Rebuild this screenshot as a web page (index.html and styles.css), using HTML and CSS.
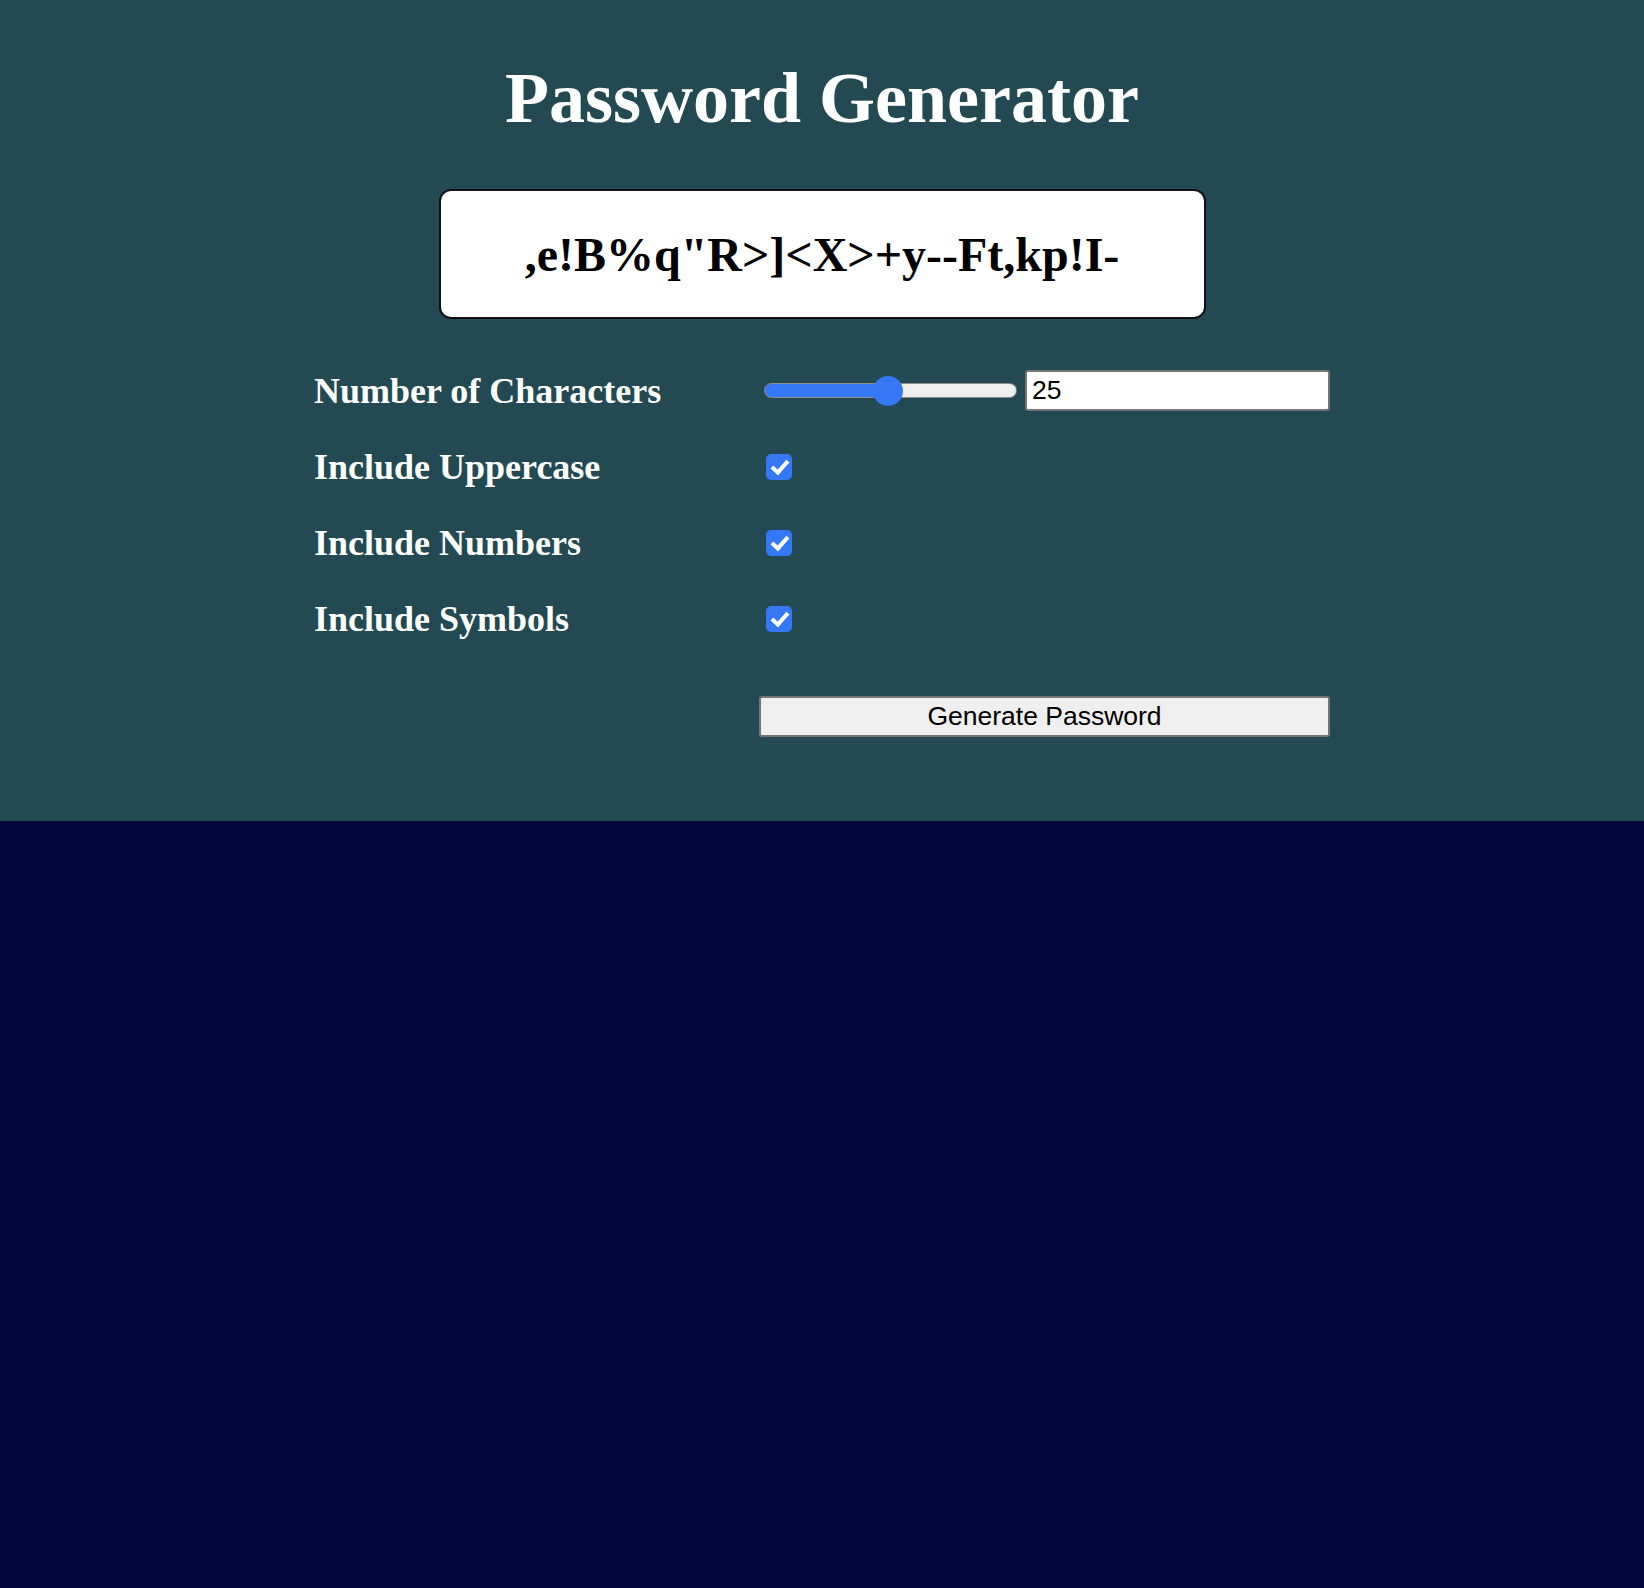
FILE: index.html
```html
<!DOCTYPE html>
<html lang="en">
<head>
<meta charset="utf-8">
<title>Password Generator</title>
<link rel="stylesheet" href="styles.css">
</head>
<body>
<main class="app">
  <h1 class="title">Password Generator</h1>
  <div class="output">,e!B%q"R&gt;]&lt;X&gt;+y--Ft,kp!I-</div>
  <form class="options">
    <label class="label" for="len">Number of Characters</label>
    <div class="control length">
      <input class="range" type="range" id="len" min="1" max="50" value="25" style="--fill: 49%">
      <input class="number" type="number" min="1" max="50" value="25">
    </div>

    <label class="label" for="upper">Include Uppercase</label>
    <div class="control"><input class="check" type="checkbox" id="upper" checked></div>

    <label class="label" for="nums">Include Numbers</label>
    <div class="control"><input class="check" type="checkbox" id="nums" checked></div>

    <label class="label" for="syms">Include Symbols</label>
    <div class="control"><input class="check" type="checkbox" id="syms" checked></div>

    <div class="spacer"></div>
    <div class="control action"><button type="button" class="generate">Generate Password</button></div>
  </form>
</main>
</body>
</html>
```

FILE: styles.css
```css
html, body {
  margin: 0;
  padding: 0;
}

body {
  background: #02063d;
  font-family: "Liberation Serif", "Times New Roman", serif;
  min-height: 1588px;
}

.app {
  background: #234a52;
  padding: 58px 0 84px;
  display: flex;
  flex-direction: column;
  align-items: center;
}

.title {
  margin: 0;
  font-size: 72px;
  line-height: 80px;
  font-weight: bold;
  color: #ffffff;
}

.output {
  box-sizing: border-box;
  margin-top: 51px;
  width: 767px;
  height: 130px;
  background: #ffffff;
  border: 2px solid #111111;
  border-radius: 12px;
  display: flex;
  align-items: center;
  justify-content: center;
  font-size: 48px;
  font-weight: bold;
  color: #000000;
}

.options {
  margin-top: 51px;
  width: 1016px;
  display: grid;
  grid-template-columns: 445px 1fr;
  grid-template-rows: 41px 40px 40px 40px 62px;
  row-gap: 36px;
  align-items: center;
}

.label {
  color: #ffffff;
  font-weight: bold;
  font-size: 36px;
  white-space: nowrap;
}

.control {
  display: flex;
  align-items: center;
  height: 41px;
}

.action {
  align-self: end;
}

.range {
  -webkit-appearance: none;
  appearance: none;
  margin: 0 0 0 5px;
  width: 253px;
  height: 30px;
  background: transparent;
  padding: 0;
}

.range::-webkit-slider-runnable-track {
  box-sizing: border-box;
  height: 15px;
  border: 1px solid #8c8c8c;
  border-radius: 8px;
  background: linear-gradient(to right, #3478f6 0, #3478f6 var(--fill), #efefef var(--fill), #efefef 100%);
}

.range::-webkit-slider-thumb {
  -webkit-appearance: none;
  appearance: none;
  width: 30px;
  height: 30px;
  border-radius: 50%;
  background: #3478f6;
  border: none;
  margin-top: -8.5px;
}

.number {
  box-sizing: border-box;
  margin: 0 0 0 8px;
  flex: 1;
  height: 41px;
  border: 2px solid #767676;
  border-radius: 3px;
  padding: 0 5px;
  font-family: "Liberation Sans", Arial, sans-serif;
  font-size: 26.5px;
  color: #000000;
  background: #ffffff;
  -moz-appearance: textfield;
}

.number::-webkit-inner-spin-button,
.number::-webkit-outer-spin-button {
  -webkit-appearance: none;
  margin: 0;
}

.check {
  -webkit-appearance: none;
  appearance: none;
  position: relative;
  margin: 0 0 0 7px;
  width: 26px;
  height: 26px;
  border-radius: 5px;
  background: #3478f6;
}

.check::after {
  content: "";
  position: absolute;
  left: 9px;
  top: 3px;
  width: 6px;
  height: 13px;
  border-right: 4px solid #ffffff;
  border-bottom: 4px solid #ffffff;
  transform: rotate(42deg);
}

.generate {
  box-sizing: border-box;
  width: 100%;
  height: 41px;
  margin: 0;
  background: #efefef;
  border: 2px solid #767676;
  border-radius: 3px;
  font-family: "Liberation Sans", Arial, sans-serif;
  font-size: 26.5px;
  color: #000000;
  padding: 0;
}
```
